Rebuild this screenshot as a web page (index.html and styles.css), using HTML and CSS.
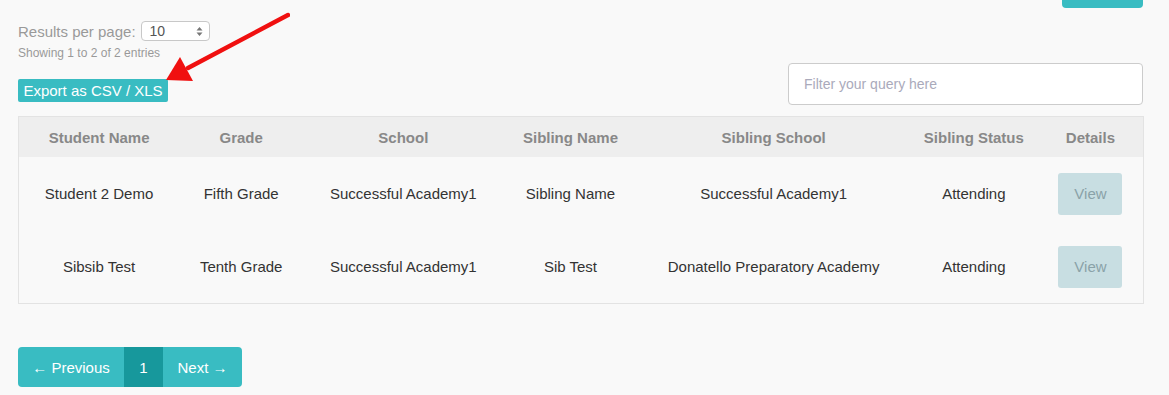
FILE: index.html
```html
<!DOCTYPE html>
<html>
<head>
<meta charset="utf-8">
<link rel="stylesheet" href="styles.css">
</head>
<body>
<div class="page">
  <div class="top-row">
    <div class="top-btn"></div>
  </div>
  <div class="controls">
    <div class="left-controls">
      <div class="per-page">
        <span>Results per page:</span>
        <span class="select">10<span class="spin">
          <svg width="7" height="11" viewBox="0 0 7 11"><path d="M0.5 4.5 L3.5 1 L6.5 4.5Z M0.5 6.5 L3.5 10 L6.5 6.5Z" fill="#777"/></svg>
        </span></span>
      </div>
      <div class="showing">Showing 1 to 2 of 2 entries</div>
      <button class="export">Export as CSV / XLS</button>
    </div>
    <div class="filter">Filter your query here</div>
  </div>
  <div class="table-wrap">
    <table>
      <colgroup>
        <col style="width:160px"><col style="width:124px"><col style="width:200px"><col style="width:134px"><col style="width:272px"><col style="width:128px"><col style="width:105px">
      </colgroup>
      <thead>
        <tr><th>Student Name</th><th>Grade</th><th>School</th><th>Sibling Name</th><th>Sibling School</th><th>Sibling Status</th><th>Details</th></tr>
      </thead>
      <tbody>
        <tr><td>Student 2 Demo</td><td>Fifth Grade</td><td>Successful Academy1</td><td>Sibling Name</td><td>Successful Academy1</td><td>Attending</td><td><span class="view">View</span></td></tr>
        <tr><td>Sibsib Test</td><td>Tenth Grade</td><td>Successful Academy1</td><td>Sib Test</td><td>Donatello Preparatory Academy</td><td>Attending</td><td><span class="view">View</span></td></tr>
      </tbody>
    </table>
  </div>
  <div class="pager">
    <span class="pg">&larr; Previous</span><span class="pg active">1</span><span class="pg">Next &rarr;</span>
  </div>
  <svg class="arrow" width="140" height="80" viewBox="0 0 140 80">
    <line x1="138" y1="3" x2="38" y2="56" stroke="#f01010" stroke-width="4.5" stroke-linecap="round"/>
    <polygon points="16,68 30,45 43,69" fill="#f01010"/>
  </svg>
</div>
</body>
</html>
```
FILE: styles.css
```css
* { box-sizing: border-box; }
html, body { margin: 0; padding: 0; background: #f9f9f9; }
body { font-family: "Liberation Sans", Arial, sans-serif; color: #333; font-size: 15px; }
.page { position: relative; width: 1169px; height: 395px; padding: 0 26px 0 18px; }
.top-row { display: flex; justify-content: flex-end; height: 21px; }
.top-btn { width: 81px; height: 8px; background: #39bcc2; border-radius: 0 0 4px 4px; }
.controls { display: flex; justify-content: space-between; align-items: flex-start; }
.left-controls { display: flex; flex-direction: column; align-items: flex-start; }
.per-page { display: flex; align-items: center; gap: 5px; color: #999; font-size: 15px; height: 20px; }
.select { display: inline-flex; align-items: center; justify-content: space-between; width: 69px; height: 20px; border: 1px solid #c8c8c8; border-radius: 4px; background: #fff; color: #555; padding: 0 6px 0 8px; font-size: 14px; }
.spin { display: flex; align-items: center; }
.showing { font-size: 12px; color: #999; margin-top: 5px; line-height: 14px; }
.export { margin-top: 19px; border: 0; background: #39bcc2; color: #fff; font-family: inherit; font-size: 15px; height: 23px; width: 150px; padding: 0; border-radius: 2px; }
.filter { margin-top: 42px; width: 355px; height: 42px; border: 1px solid #ccc; border-radius: 4px; background: #fff; color: #aab; padding: 0 15px; display: flex; align-items: center; font-size: 14px; }
.table-wrap { margin-top: 11px; border: 1px solid #e3e3e3; width: 1126px; }
table { border-collapse: collapse; table-layout: fixed; width: 100%; }
th { background: #eeeeee; color: #888; font-weight: bold; height: 40px; text-align: center; font-size: 15px; padding: 0; }
td { height: 73px; text-align: center; color: #333; font-size: 15px; padding: 0; }
.view { display: inline-flex; align-items: center; justify-content: center; width: 64px; height: 42px; background: #c8dee2; color: #8aa2a8; border-radius: 3px; font-size: 15px; }
.pager { display: flex; margin-top: 43px; width: max-content; border-radius: 4px; overflow: hidden; }
.pg { background: #39bcc2; color: #fff; height: 40px; display: flex; align-items: center; justify-content: center; font-size: 15px; padding: 0; }
.pg:first-child { width: 106px; }
.pg.active { background: #17989c; width: 39px; }
.pg:last-child { width: 79px; }
.arrow { position: absolute; left: 150px; top: 12px; }
```
